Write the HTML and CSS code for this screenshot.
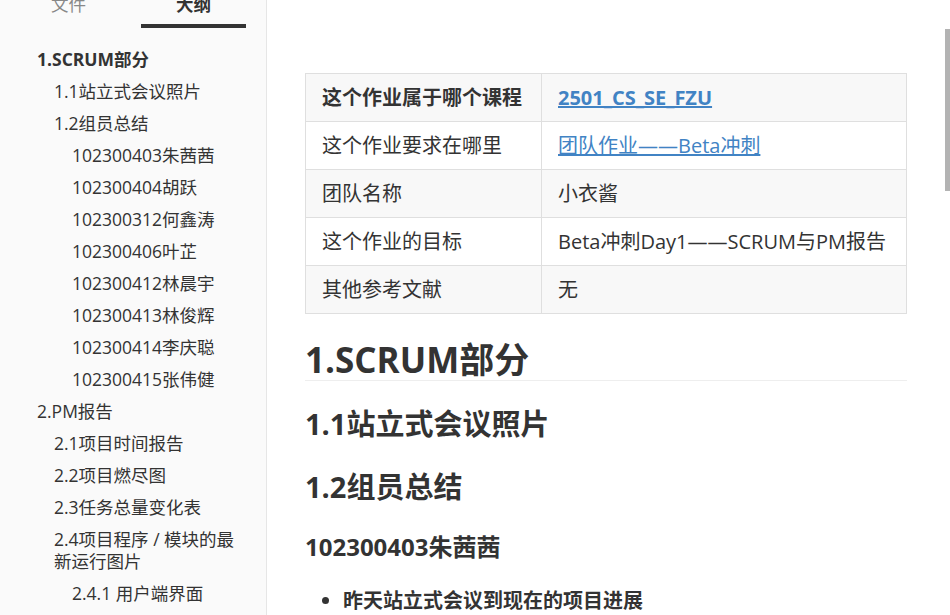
FILE: index.html
```html
<!DOCTYPE html>
<html>
<head>
  <title>Beta冲刺Day1</title>
  <link rel="stylesheet" href="styles.css">
</head>
<body>
  <div class="sidebar">
    <div class="tabs">
      <div class="tab">文件</div>
      <div class="tab active">大纲</div>
    </div>
    <ul class="outline">
      <li class="lv1 current">1.SCRUM部分</li>
      <li class="lv2">1.1站立式会议照片</li>
      <li class="lv2">1.2组员总结</li>
      <li class="lv3">102300403朱茜茜</li>
      <li class="lv3">102300404胡跃</li>
      <li class="lv3">102300312何鑫涛</li>
      <li class="lv3">102300406叶芷</li>
      <li class="lv3">102300412林晨宇</li>
      <li class="lv3">102300413林俊辉</li>
      <li class="lv3">102300414李庆聪</li>
      <li class="lv3">102300415张伟健</li>
      <li class="lv1">2.PM报告</li>
      <li class="lv2">2.1项目时间报告</li>
      <li class="lv2">2.2项目燃尽图</li>
      <li class="lv2">2.3任务总量变化表</li>
      <li class="lv2">2.4项目程序 / 模块的最新运行图片</li>
      <li class="lv3">2.4.1 用户端界面</li>
    </ul>
  </div>

  <div class="main">
    <table class="info">
      <thead>
        <tr>
          <th>这个作业属于哪个课程</th>
          <th><a href="#">2501_CS_SE_FZU</a></th>
        </tr>
      </thead>
      <tbody>
        <tr>
          <td>这个作业要求在哪里</td>
          <td><a href="#">团队作业——Beta冲刺</a></td>
        </tr>
        <tr>
          <td>团队名称</td>
          <td>小衣酱</td>
        </tr>
        <tr>
          <td>这个作业的目标</td>
          <td>Beta冲刺Day1——SCRUM与PM报告</td>
        </tr>
        <tr>
          <td>其他参考文献</td>
          <td>无</td>
        </tr>
      </tbody>
    </table>

    <h1>1.SCRUM部分</h1>
    <h2>1.1站立式会议照片</h2>
    <h2>1.2组员总结</h2>
    <h3>102300403朱茜茜</h3>
    <ul class="points">
      <li><strong>昨天站立式会议到现在的项目进展</strong></li>
    </ul>
  </div>

  <div class="scrollbar"></div>
</body>
</html>
```

FILE: styles.css
```css
html, body {
  margin: 0;
  padding: 0;
  height: 615px;
  overflow: hidden;
}

body {
  display: flex;
  font-family: "Open Sans", "Noto Sans CJK SC", sans-serif;
  color: #333333;
  background-color: #FFFFFF;
}

/* sidebar */
.sidebar {
  width: 266px;
  flex-shrink: 0;
  background-color: #FAFAFA;
  border-right: 1px solid #E6E6E6;
  font-size: 17.5px;
  line-height: 22px;
}

.tabs {
  display: flex;
  gap: 20px;
  padding-left: 16px;
  margin-top: -7px;
}

.tab {
  width: 105px;
  text-align: center;
  padding-bottom: 9px;
  border-bottom: 4px solid transparent;
  color: #888888;
}

.tab.active {
  color: #333333;
  font-weight: bold;
  border-bottom-color: #333333;
}

.outline {
  list-style: none;
  margin: 15px 0 0;
  padding: 0 20px 0 0;
}

.outline li {
  padding-top: 5px;
  padding-bottom: 5px;
}

.outline .lv1 { padding-left: 37px; }
.outline .lv2 { padding-left: 54px; }
.outline .lv3 { padding-left: 72px; }

.outline .current {
  font-weight: bold;
}

/* main */
.main {
  flex: 1;
  padding: 73px 43px 0 38px;
  font-size: 20px;
  line-height: 32px;
}

a {
  color: #4183C4;
}

.info {
  width: 100%;
  border-collapse: collapse;
}

.info th,
.info td {
  border: 1px solid #DFDFDF;
  padding: 7.5px 16px;
  text-align: left;
}

.info th:first-child,
.info td:first-child {
  width: 203px;
}

.info thead tr {
  background-color: #F8F8F8;
}

.info tbody tr:nth-child(2n) {
  background-color: #F8F8F8;
}

h1 {
  font-size: 35px;
  line-height: 40px;
  margin: 26px 0 0;
  border-bottom: 1px solid #EEEEEE;
}

h2 {
  font-size: 29px;
  line-height: 40px;
  margin: 23px 0 0;
}

h3 {
  font-size: 24px;
  line-height: 36px;
  margin: 22px 0 0;
}

.points {
  margin: 20px 0 0;
  padding-left: 38px;
}

.scrollbar {
  position: absolute;
  top: 29px;
  right: 0;
  width: 5px;
  height: 162px;
  background-color: #B3B3B3;
}
```
